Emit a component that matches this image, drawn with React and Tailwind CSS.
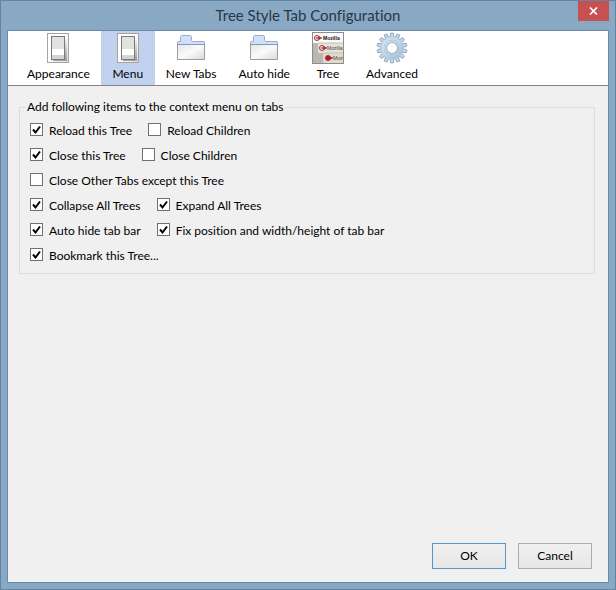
import { useState } from "react";

function SwitchIcon() {
  return (
    <svg width="32" height="32" viewBox="0 0 32 32" aria-hidden="true">
      <defs>
        <linearGradient id="plate" x1="0" y1="0" x2="1" y2="1">
          <stop offset="0.5" stopColor="#ffffff" />
          <stop offset="1" stopColor="#dcdcdc" />
        </linearGradient>
        <linearGradient id="shade" x1="0" y1="0" x2="0" y2="1">
          <stop offset="0" stopColor="#8d8d8d" stopOpacity="0" />
          <stop offset="1" stopColor="#8d8d8d" stopOpacity="0.8" />
        </linearGradient>
      </defs>
      <rect x="5.5" y="1.5" width="21" height="29" fill="url(#plate)" stroke="#a3a3a3" />
      <path d="M23 6h2v23H11v-1h12z" fill="url(#shade)" />
      <rect x="9.5" y="4.5" width="13" height="23" fill="#fff" stroke="#7c7875" />
      <rect x="10" y="5" width="12" height="12" fill="#e2e2e0" />
      <rect x="10" y="23" width="12" height="4" fill="#d4d4d2" />
    </svg>
  );
}

function FolderIcon() {
  return (
    <svg width="32" height="32" viewBox="0 0 32 32" aria-hidden="true">
      <defs>
        <linearGradient id="page" x1="0" y1="0" x2="1" y2="1">
          <stop offset="0" stopColor="#e6e6e8" />
          <stop offset="0.5" stopColor="#fafafa" />
          <stop offset="1" stopColor="#d9d9dc" />
        </linearGradient>
      </defs>
      <path d="M2.5 12.5V10l1-.5h2v-5l1-1h9l1 1v4l1 1h11.500l.5.5v2.500z" fill="#cfe1f8" stroke="#9aabc6" />
      <path d="M2.5 12.5h27v15h-27z" fill="url(#page)" stroke="#9a9da6" />
      <path d="M2 12.5h28" stroke="#8599bb" />
    </svg>
  );
}

function Bullet({ x, y, filled }) {
  return (
    <g transform={`translate(${x} ${y})`} fill="none" stroke="#a3343d">
      <circle cx="3" cy="3" r="2.500" fill={filled ? "#c4161c" : "#f3dede"} />
      <path d="M2 3h6" stroke="#8f2029" />
      <path d="M4.500 1v4l3-2z" fill="#a3242e" stroke="none" />
    </g>
  );
}

function TreeIcon() {
  return (
    <svg width="32" height="32" viewBox="0 0 32 32" aria-hidden="true">
      <rect width="32" height="32" fill="#b9b8b5" />
      <rect x="1" y="1" width="31" height="10" fill="#fbfaf8" />
      <rect x="6" y="11" width="26" height="10" fill="#e5e2d7" />
      <rect x="11" y="21" width="21" height="11" fill="#dedbcd" />
      <path d="M6 11h26M11 21h21" stroke="#c5c1b5" />
      <Bullet x={2} y={3} />
      <Bullet x={7} y={13} />
      <Bullet x={13} y={23} filled />
      <g fontFamily="Liberation Sans, sans-serif" fontSize="5">
        <text x="11" y="8" fontWeight="700" fill="#111">Mozilla</text>
        <text x="15" y="18" fill="#4a453e">Mozilla</text>
        <text x="21" y="28" fill="#4a453e">Mozi</text>
      </g>
      <rect x="0.5" y="0.5" width="31" height="31" fill="none" stroke="#8f8d89" />
    </svg>
  );
}

const TEETH = Array.from({ length: 14 }, (_, i) => (i * 360) / 14);

function GearIcon() {
  return (
    <svg width="32" height="32" viewBox="0 0 32 32" aria-hidden="true">
      <defs>
        <linearGradient id="metal" x1="0" y1="0" x2="1" y2="1">
          <stop offset="0" stopColor="#dbeaf5" />
          <stop offset="0.5" stopColor="#c3d9ea" />
          <stop offset="1" stopColor="#9dbbd4" />
        </linearGradient>
      </defs>
      {TEETH.map((angle) => (
        <path key={angle} d="M14 6l.6-5h2.800l.6 5z" fill="#c0d5e5" stroke="#7f98b0" strokeWidth="0.7" transform={`rotate(${angle} 16 16)`} />
      ))}
      <circle cx="16" cy="16" r="11" fill="url(#metal)" stroke="#a9bfd2" strokeWidth="0.5" />
      <circle cx="16" cy="16" r="8" fill="none" stroke="#b0c8dc" />
      <circle cx="16" cy="16" r="5.500" fill="#fff" stroke="#9fb3c9" strokeWidth="1.200" />
    </svg>
  );
}

const TABS = [
  ["Appearance", SwitchIcon],
  ["Menu", SwitchIcon],
  ["New Tabs", FolderIcon],
  ["Auto hide", FolderIcon],
  ["Tree", TreeIcon],
  ["Advanced", GearIcon],
];

const ROWS = [
  [["Reload this Tree", true], ["Reload Children", false]],
  [["Close this Tree", true], ["Close Children", false]],
  [["Close Other Tabs except this Tree", false]],
  [["Collapse All Trees", true], ["Expand All Trees", true]],
  [["Auto hide tab bar", true], ["Fix position and width/height of tab bar", true]],
  [["Bookmark this Tree...", true]],
];

function Check({ label, initial }) {
  return (
    <label className="flex items-start gap-1.5">
      <span className="grid">
        <input
          type="checkbox"
          defaultChecked={initial}
          className="peer col-start-1 row-start-1 size-[13px] appearance-none border border-[#707070] bg-white"
        />
        <svg
          viewBox="0 0 13 13"
          className="pointer-events-none invisible col-start-1 row-start-1 size-[13px] peer-checked:visible"
          aria-hidden="true"
        >
          <path d="M3 6.500l2.500 3L10 3.500" fill="none" stroke="#000" strokeWidth="2" />
        </svg>
      </span>
      {label}
    </label>
  );
}

export default function App() {
  const [active, setActive] = useState("Menu");
  return (
    <div className="flex min-h-screen flex-col border border-[#6284a3] bg-[#88a8c3] px-1.5 pb-1.5 font-['Lato','Open_Sans',sans-serif] text-[12px] leading-4 text-black [font-variant-ligatures:none]">
      <header className="grid h-[29px] grid-cols-[1fr_auto_1fr] items-center">
        <h1 className="col-start-2 pb-0.5 text-[15px] leading-5 text-[#26384a]">Tree Style Tab Configuration</h1>
        <button aria-label="Close" className="grid h-5 w-[31px] place-items-center self-start justify-self-end bg-[#c75050]">
          <svg width="9" height="8" viewBox="0 0 9 8" aria-hidden="true">
            <path d="M1 .5l7 7M8 .5l-7 7" stroke="#fff" strokeWidth="1.700" />
          </svg>
        </button>
      </header>
      <main className="flex flex-1 flex-col border border-[#6b8aa5] bg-[#f0f0f0]">
        <nav className="flex h-[55px] border-b border-[#808589] bg-white pl-2">
          {TABS.map(([name, Icon]) => (
            <button
              key={name}
              aria-pressed={active === name}
              onClick={() => setActive(name)}
              className={`flex min-w-[54px] flex-col items-center gap-0.5 px-[11px] pt-px ${active === name ? "bg-[#c1d2ee]" : ""}`}
            >
              <Icon />
              <span className="whitespace-nowrap">{name}</span>
            </button>
          ))}
        </nav>
        <fieldset className="mt-[13px] mr-[13px] ml-[11px] border border-[#dcdcdc] px-2.5 pt-2 pb-[9px]">
          <legend className="-ml-1 px-px">Add following items to the context menu on tabs</legend>
          <div className="flex flex-col gap-[9px]">
            {ROWS.map((row) => (
              <div key={row[0][0]} className="flex gap-4">
                {row.map(([label, on]) => (
                  <Check key={label} label={label} initial={on} />
                ))}
              </div>
            ))}
          </div>
        </fieldset>
        <footer className="mt-auto flex justify-end gap-3 px-4 pb-[13px]">
          <button className="h-[26px] w-[74px] border border-[#4f97cd] bg-linear-to-b from-[#f0f0f0] to-[#e7e7e7]">OK</button>
          <button className="h-[26px] w-[74px] border border-[#acacac] bg-linear-to-b from-[#f0f0f0] to-[#e7e7e7]">Cancel</button>
        </footer>
      </main>
    </div>
  );
}
